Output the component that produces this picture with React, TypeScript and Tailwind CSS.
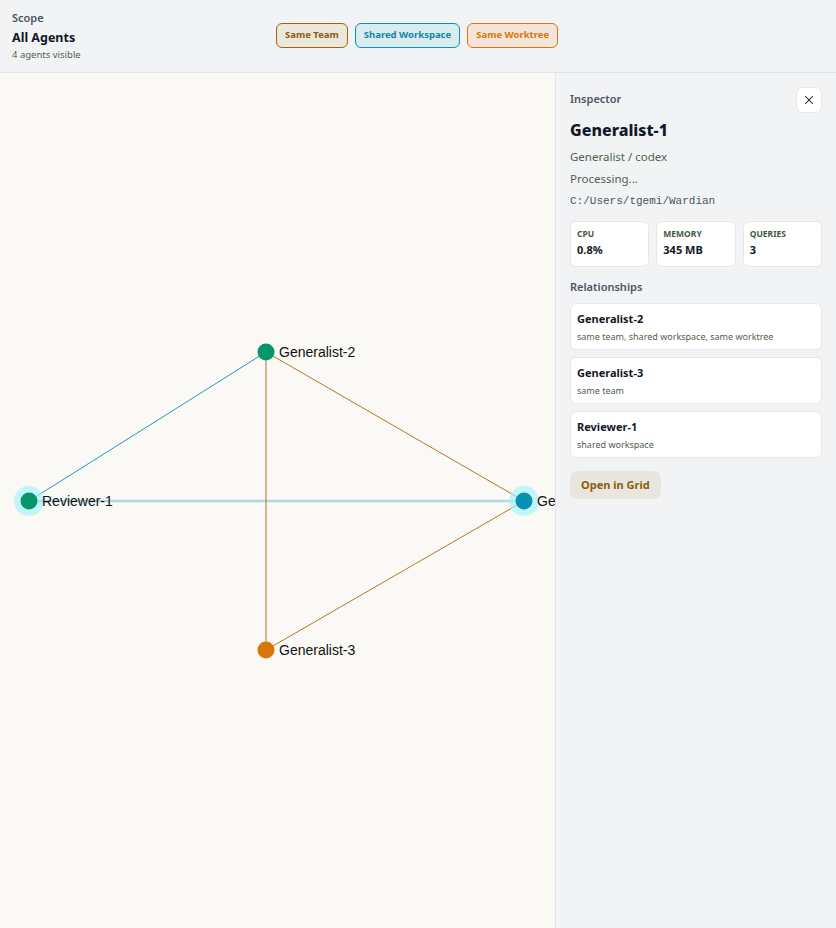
import { X } from "lucide-react";

type Agent = { id: string; x: number; y: number; color: string; halo?: boolean };

const AGENTS: Agent[] = [
  { id: "Generalist-2", x: 266, y: 279, color: "#059669" },
  { id: "Reviewer-1", x: 29, y: 428, color: "#059669", halo: true },
  { id: "Generalist-1", x: 524, y: 428, color: "#0891b2", halo: true },
  { id: "Generalist-3", x: 266, y: 577, color: "#d97706" },
];

const EDGES = [
  { a: "Reviewer-1", b: "Generalist-1", stroke: "#0891b2", w: 2.5, o: 0.3 },
  { a: "Reviewer-1", b: "Generalist-2", stroke: "#0891b2", w: 1, o: 0.9 },
  { a: "Generalist-2", b: "Generalist-1", stroke: "#a16207", w: 1, o: 0.85 },
  { a: "Generalist-2", b: "Generalist-3", stroke: "#a16207", w: 1, o: 0.85 },
  { a: "Generalist-3", b: "Generalist-1", stroke: "#a16207", w: 1, o: 0.85 },
];

const STATS = [
  { label: "CPU", value: "0.8%" },
  { label: "Memory", value: "345 MB" },
  { label: "Queries", value: "3" },
];

const RELATIONS = [
  { name: "Generalist-2", kinds: "same team, shared workspace, same worktree" },
  { name: "Generalist-3", kinds: "same team" },
  { name: "Reviewer-1", kinds: "shared workspace" },
];

const ui = "font-['Noto_Sans',sans-serif]";

function Graph() {
  const at = (id: string) => AGENTS.find((n) => n.id === id)!;
  return (
    <svg className="block h-full w-full" viewBox="0 0 555 855" preserveAspectRatio="xMinYMin slice">
      {EDGES.map((e) => {
        const a = at(e.a), b = at(e.b);
        return <line key={e.a + e.b} x1={a.x} y1={a.y} x2={b.x} y2={b.y} stroke={e.stroke} strokeWidth={e.w} strokeOpacity={e.o} />;
      })}
      {AGENTS.map((n) => (
        <g key={n.id}>
          {n.halo && <circle cx={n.x} cy={n.y} r={15} fill="#a5f3fc" fillOpacity={0.65} />}
          <circle cx={n.x} cy={n.y} r={8.5} fill={n.color} />
          <text x={n.x + 13} y={n.y + 5} fontSize={14} fill="#111" fontFamily="'Liberation Sans', Arial, sans-serif">{n.id}</text>
        </g>
      ))}
    </svg>
  );
}

export default function App() {
  return (
    <div className={`flex h-[928px] w-[836px] flex-col overflow-hidden bg-[#f2f3f5] ${ui}`}>
      {/* scope bar */}
      <div className="flex h-[73px] shrink-0 items-start border-b border-[#e2e4e8] px-3 pt-[10px]">
        <div className="w-[264px]">
          <p className="text-[11px] font-semibold leading-[16px] text-[#4b5563]">Scope</p>
          <p className="mt-[3px] text-[12.5px] font-bold leading-[17px] text-[#111827]">All Agents</p>
          <p className="mt-[2px] text-[9.5px] leading-[13px] text-[#4f5f4f]">4 agents visible</p>
        </div>
        <div className="mt-[13px] flex gap-[7px]">
          <span className="flex h-[25px] items-center rounded-[6px] border border-[#a16207] bg-[#ece7dc] px-[8px] text-[9.5px] font-bold text-[#8a5d0b]">Same Team</span>
          <span className="flex h-[25px] items-center rounded-[6px] border border-[#0891b2] bg-[#dbecf0] px-[8px] text-[9.5px] font-bold text-[#0e87a6]">Shared Workspace</span>
          <span className="flex h-[25px] items-center rounded-[6px] border border-[#d97706] bg-[#f3e5d9] px-[8px] text-[9.5px] font-bold text-[#d97706]">Same Worktree</span>
        </div>
      </div>

      <div className="flex min-h-0 flex-1">
        <div className="w-[555px] shrink-0 overflow-hidden bg-[#faf9f5]">
          <Graph />
        </div>

        {/* inspector */}
        <div className="flex-1 border-l border-[#e2e4e8] px-[14px] pt-[14px]">
          <div className="flex items-start justify-between">
            <p className="mt-[4px] text-[11px] font-semibold text-[#4b5563]">Inspector</p>
            <button className="flex h-[26px] w-[26px] items-center justify-center rounded-[6px] border border-[#e5e7eb] bg-white text-[#111827]">
              <X size={14} strokeWidth={1.8} />
            </button>
          </div>
          <p className="mt-[6px] text-[16px] font-extrabold leading-[22px] text-[#111827]">Generalist-1</p>
          <p className="mt-[8px] text-[11.5px] leading-[16px] text-[#4f5f4f]">Generalist / codex</p>
          <p className="mt-[6px] text-[11.5px] leading-[16px] text-[#4f5f4f]">Processing...</p>
          <p className="mt-[6px] font-['Liberation_Mono',monospace] text-[11px] leading-[16px] text-[#4b5563]">C:/Users/tgemi/Wardian</p>

          <div className="mt-[12px] grid grid-cols-3 gap-[7px]">
            {STATS.map((s) => (
              <div key={s.label} className="h-[46px] rounded-[6px] border border-[#e5e7eb] bg-white px-[6px] pt-[6px]">
                <p className="text-[8.5px] font-bold uppercase leading-[12px] text-[#3f5a3f]">{s.label}</p>
                <p className="mt-[2px] text-[11px] font-bold leading-[15px] text-[#111827]">{s.value}</p>
              </div>
            ))}
          </div>

          <p className="mt-[12px] text-[11px] font-semibold leading-[16px] text-[#4b5563]">Relationships</p>
          <div className="mt-[8px] flex flex-col gap-[7px]">
            {RELATIONS.map((r) => (
              <div key={r.name} className="h-[47px] rounded-[6px] border border-[#e5e7eb] bg-white px-[6px] pt-[7px]">
                <p className="text-[11px] font-bold leading-[15px] text-[#111827]">{r.name}</p>
                <p className="mt-[4px] text-[9px] leading-[13px] text-[#4f5f4f]">{r.kinds}</p>
              </div>
            ))}
          </div>

          <button className="mt-[13px] h-[28px] rounded-[7px] bg-[#e9e6df] px-[11px] text-[11px] font-bold text-[#8a5d0b]">Open in Grid</button>
        </div>
      </div>
    </div>
  );
}
